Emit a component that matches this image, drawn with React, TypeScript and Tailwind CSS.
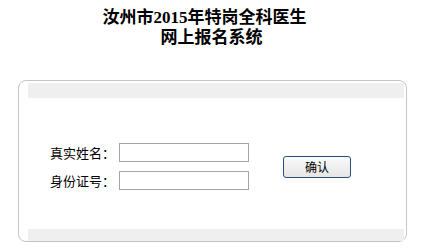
import React from "react";

export default function App() {
  const cjk = { fontFamily: '"SimSun", "Noto Sans CJK SC", sans-serif' };
  return (
    <div className="w-[423px] h-[248px] bg-white overflow-hidden" style={cjk}>
      <div
        className="pt-[8px] text-center font-bold text-[17px] leading-[20px] text-black"
        style={{ fontFamily: '"Liberation Serif", "Noto Sans CJK SC", serif' }}
      >
        <div className="pr-[14px]">汝州市2015年特岗全科医生</div>
        <div>网上报名系统</div>
      </div>
      <div className="mt-[32px] ml-[18px] w-[389px] h-[162px] border border-[#c4c4c4] rounded-[8px] flex flex-col">
        <div className="mt-[2px] ml-[9px] mr-[2px] h-[15px] bg-[#efefef]" />
        <div className="flex-1 pl-[31px] pt-[45px]">
          <div className="flex items-center">
            <div className="flex flex-col gap-[9px]">
              <div className="flex items-center">
                <span className="w-[69px] text-[13px] leading-[19px] text-black">真实姓名：</span>
                <div className="w-[130px] h-[19px] border border-[#a5a5a5] bg-white" />
              </div>
              <div className="flex items-center">
                <span className="w-[69px] text-[13px] leading-[19px] text-black">身份证号：</span>
                <div className="w-[130px] h-[19px] border border-[#a5a5a5] bg-white" />
              </div>
            </div>
            <button className="ml-[34px] w-[68px] h-[22px] border border-[#2a5077] rounded-[3px] bg-gradient-to-b from-[#fafafa] to-[#e6e6e6] text-[12px] leading-[20px] text-black flex items-center justify-center">
              确认
            </button>
          </div>
        </div>
        <div className="ml-[9px] mr-[2px] h-[12px] bg-[#efefef]" />
      </div>
    </div>
  );
}
